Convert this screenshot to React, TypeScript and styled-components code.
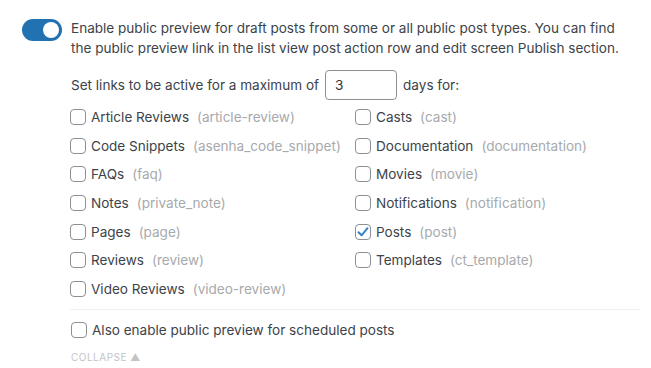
import React, { useState } from 'react'
import styled, { createGlobalStyle } from 'styled-components'

const GlobalStyle = createGlobalStyle`
  body {
    margin: 0;
    background: #ffffff;
    font-family: Inter, Roboto, "Liberation Sans", sans-serif;
    color: #3c434a;
  }
`

const Page = styled.div`
  display: flex;
  gap: 9px;
  padding: 18px 11px 0 22px;
`

const Switch = styled.button<{ on: boolean }>`
  flex: none;
  position: relative;
  width: 40px;
  height: 22px;
  border: none;
  border-radius: 11px;
  padding: 0;
  background: ${p => (p.on ? '#2271b1' : '#c3c4c7')};
  cursor: pointer;
  margin-top: 1px;
`

const Knob = styled.span<{ on: boolean }>`
  position: absolute;
  top: 3px;
  left: ${p => (p.on ? '21px' : '3px')};
  width: 16px;
  height: 16px;
  border-radius: 50%;
  background: #ffffff;
`

const Body = styled.div`
  flex: 1;
  display: flex;
  flex-direction: column;
  font-size: 13.55px;
`

const Intro = styled.p`
  margin: 0;
  max-width: 556px;
  line-height: 20px;
  color: #3c434a;
`

const DaysRow = styled.div`
  display: flex;
  align-items: center;
  gap: 6px;
  margin-top: 12px;
  height: 30px;
`

const DaysInput = styled.input`
  width: 72px;
  height: 30px;
  box-sizing: border-box;
  border: 1px solid #8c8f94;
  border-radius: 4px;
  padding: 0 9px;
  font: inherit;
  color: #2c3338;
`

const TypeGrid = styled.div`
  display: grid;
  grid-template-columns: 285px 1fr;
  grid-auto-flow: column;
  grid-template-rows: repeat(7, 28.6px);
  margin-top: 3px;
  margin-left: -1px;
`

const Option = styled.label`
  display: flex;
  align-items: center;
  gap: 5px;
  color: #3c434a;
  cursor: pointer;
`

const Box = styled.span<{ checked: boolean }>`
  flex: none;
  width: 16px;
  height: 16px;
  box-sizing: border-box;
  border: 1px solid #8c8f94;
  border-radius: 4px;
  display: flex;
  align-items: center;
  justify-content: center;
  background: #ffffff;
`

const Slug = styled.span`
  color: #a7aaad;
  margin-left: 3px;
`

const Divider = styled.hr`
  border: none;
  border-top: 1px solid #f0f0f1;
  margin: 6px 0 0 -1px;
  width: 570px;
`

const Scheduled = styled(Option)`
  margin-top: 12px;
  height: 16px;
`

const Collapse = styled.button`
  align-self: flex-start;
  border: none;
  background: none;
  padding: 0;
  margin-top: 13px;
  font-family: inherit;
  font-size: 10px;
  letter-spacing: 0.5px;
  color: #c3c4c7;
  cursor: pointer;
`

const types: [string, string][] = [
  ['Article Reviews', 'article-review'],
  ['Code Snippets', 'asenha_code_snippet'],
  ['FAQs', 'faq'],
  ['Notes', 'private_note'],
  ['Pages', 'page'],
  ['Reviews', 'review'],
  ['Video Reviews', 'video-review'],
  ['Casts', 'cast'],
  ['Documentation', 'documentation'],
  ['Movies', 'movie'],
  ['Notifications', 'notification'],
  ['Posts', 'post'],
  ['Templates', 'ct_template'],
]

function Check({ checked }: { checked: boolean }) {
  return (
    <Box checked={checked}>
      {checked && (
        <svg width="14" height="14" viewBox="0 0 14 14">
          <path d="M2.5 7.2 L5.6 10.3 L11.5 3.2" fill="none" stroke="#3582c4" strokeWidth="2" strokeLinecap="round" strokeLinejoin="round" />
        </svg>
      )}
    </Box>
  )
}

export default function App() {
  const [on, setOn] = useState(true)
  const [picked, setPicked] = useState<string[]>(['post'])
  const [scheduled, setScheduled] = useState(false)

  const toggle = (slug: string) =>
    setPicked(p => (p.includes(slug) ? p.filter(s => s !== slug) : [...p, slug]))

  return (
    <>
      <GlobalStyle />
      <Page>
        <Switch on={on} onClick={() => setOn(!on)}>
          <Knob on={on} />
        </Switch>
        <Body>
          <Intro>
            Enable public preview for draft posts from some or all public post types. You can find
            the public preview link in the list view post action row and edit screen Publish section.
          </Intro>
          <DaysRow>
            Set links to be active for a maximum of
            <DaysInput defaultValue="3" />
            days for:
          </DaysRow>
          <TypeGrid>
            {types.map(([name, slug]) => (
              <Option key={slug} onClick={() => toggle(slug)}>
                <Check checked={picked.includes(slug)} />
                {name}
                <Slug>({slug})</Slug>
              </Option>
            ))}
          </TypeGrid>
          <Divider />
          <Scheduled onClick={() => setScheduled(!scheduled)}>
            <Check checked={scheduled} />
            Also enable public preview for scheduled posts
          </Scheduled>
          <Collapse>COLLAPSE ▲</Collapse>
        </Body>
      </Page>
    </>
  )
}
